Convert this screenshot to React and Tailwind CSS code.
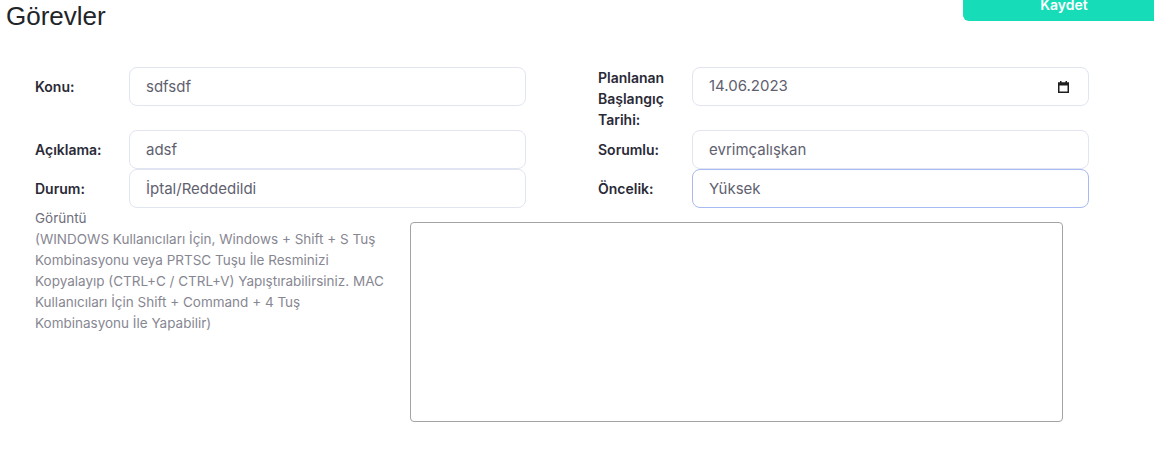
function Field({ label, children, multi }) {
  return (
    <div className="flex items-start">
      <div
        className={
          multi
            ? "w-[94px] shrink-0 text-[14px] font-semibold leading-[21px] text-[#2a2a37]"
            : "w-[94px] shrink-0 text-[14px] font-semibold leading-[39px] text-[#2a2a37]"
        }
      >
        {label}
      </div>
      {children}
    </div>
  );
}

function TextBox({ value, focused }) {
  return (
    <input
      readOnly
      value={value}
      className={
        focused
          ? "w-[397px] h-[39px] rounded-[8px] border border-[#a9b9f1] bg-white px-4 text-[15px] text-[#5f6170] outline-none"
          : "w-[397px] h-[39px] rounded-[8px] border border-[#e1e5f1] bg-white px-4 text-[15px] text-[#5f6170] outline-none"
      }
    />
  );
}

function DateBox({ value }) {
  return (
    <div className="w-[397px] h-[39px] rounded-[8px] border border-[#e1e5f1] bg-white pl-4 pr-[19px] flex items-center justify-between text-[15px] text-[#5f6170]">
      <span>{value}</span>
      <svg width="11" height="12" viewBox="0 0 11 12" className="text-[#1f1f1f]">
        <rect x="0.75" y="2.25" width="9.5" height="9" fill="none" stroke="currentColor" strokeWidth="1.5" />
        <rect x="0" y="1.5" width="11" height="3" fill="currentColor" />
        <rect x="2" y="0" width="1.5" height="2" fill="currentColor" />
        <rect x="7.5" y="0" width="1.5" height="2" fill="currentColor" />
      </svg>
    </div>
  );
}

export default function App() {
  return (
    <div className="w-[1154px] h-[463px] overflow-hidden bg-white font-['Inter',sans-serif]">
      <div className="flex justify-between items-start">
        <h1 className="ml-[6px] pt-[2px] text-[26px] leading-[28px] font-normal text-[#212529] font-['Liberation_Sans',Arial,sans-serif]">
          Görevler
        </h1>
        <button className="-mt-[12px] -mr-[11px] w-[202px] h-[33px] rounded-bl-[6px] bg-[#17dcb8] text-white text-[14px] font-semibold">
          Kaydet
        </button>
      </div>

      <div className="mt-[37px] pl-[35px]">
        <div className="flex items-start gap-[72px]">
          <Field label="Konu:">
            <TextBox value="sdfsdf" />
          </Field>
          <Field label="Planlanan Başlangıç Tarihi:" multi>
            <DateBox value="14.06.2023" />
          </Field>
        </div>
        <div className="flex items-start gap-[72px]">
          <Field label="Açıklama:">
            <TextBox value="adsf" />
          </Field>
          <Field label="Sorumlu:">
            <TextBox value="evrimçalışkan" />
          </Field>
        </div>
        <div className="flex items-start gap-[72px]">
          <Field label="Durum:">
            <TextBox value="İptal/Reddedildi" />
          </Field>
          <Field label="Öncelik:">
            <TextBox value="Yüksek" focused />
          </Field>
        </div>

        <div className="flex items-start">
          <div className="w-[355px] shrink-0 text-[13.5px] leading-[21px] whitespace-nowrap">
            <div className="text-[#6e6e7c]">Görüntü</div>
            <div className="text-[#878792]">
              (WINDOWS Kullanıcıları İçin, Windows + Shift + S Tuş
              <br />
              Kombinasyonu veya PRTSC Tuşu İle Resminizi
              <br />
              Kopyalayıp (CTRL+C / CTRL+V) Yapıştırabilirsiniz. MAC
              <br />
              Kullanıcıları İçin Shift + Command + 4 Tuş
              <br />
              Kombinasyonu İle Yapabilir)
            </div>
          </div>
          <textarea
            readOnly
            className="ml-[20px] mt-[14px] w-[653px] h-[200px] rounded-[4px] border border-[#a3a3a3] bg-white resize-none outline-none"
          />
        </div>
      </div>
    </div>
  );
}
